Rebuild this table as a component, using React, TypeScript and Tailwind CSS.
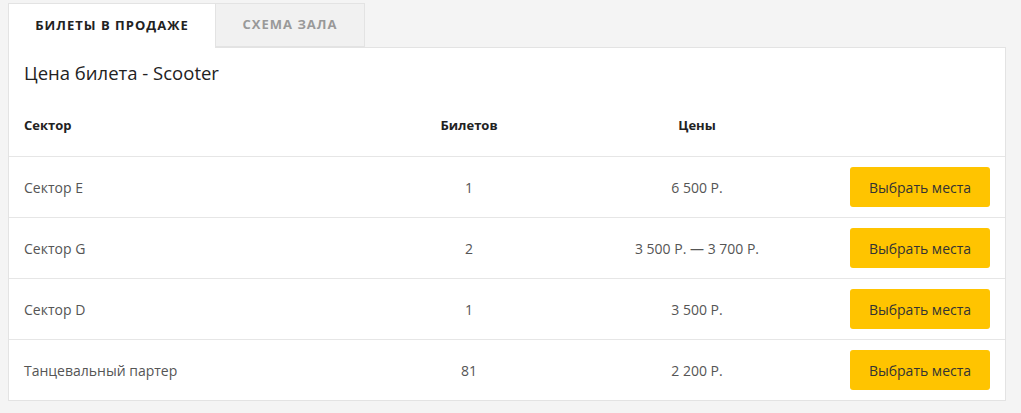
const rows = [
  { sector: "Сектор E", count: "1", price: "6 500 Р." },
  { sector: "Сектор G", count: "2", price: "3 500 Р. — 3 700 Р." },
  { sector: "Сектор D", count: "1", price: "3 500 Р." },
  { sector: "Танцевальный партер", count: "81", price: "2 200 Р." },
];

export default function App() {
  return (
    <div className="h-[413px] w-[1021px] bg-[#f4f4f4] pl-2 pt-[3px] font-['Open_Sans',sans-serif]">
      <div className="w-[998px]">
        <div className="flex">
          <div className="relative z-10 -mb-px flex h-[45px] w-[208px] items-center justify-center border border-b-0 border-[#e3e3e3] bg-white text-[13px] font-bold tracking-[1px] text-[#222]">
            БИЛЕТЫ В ПРОДАЖЕ
          </div>
          <div className="flex h-[44px] w-[149px] items-center justify-center border border-l-0 border-[#e3e3e3] bg-[#f1f1f1] text-[13px] font-bold tracking-[1px] text-[#999]">
            СХЕМА ЗАЛА
          </div>
        </div>
        <div className="border border-[#e3e3e3] bg-white">
          <div className="px-[15px] pb-[11px] pt-[13px] text-[18.5px] leading-[24px] text-[#222]">
            Цена билета - Scooter
          </div>
          <div className="grid h-[60px] grid-cols-[381px_158px_298px_1fr] items-center text-[13px] font-bold text-[#222]">
            <div className="pl-[15px]">Сектор</div>
            <div className="text-center">Билетов</div>
            <div className="text-center">Цены</div>
            <div />
          </div>
          {rows.map((r) => (
            <div
              key={r.sector}
              className="grid h-[61px] grid-cols-[381px_158px_298px_1fr] items-center border-t border-[#e6e6e6] text-[14px] text-[#555]"
            >
              <div className="pl-[15px]">{r.sector}</div>
              <div className="text-center">{r.count}</div>
              <div className="text-center">{r.price}</div>
              <div className="flex justify-end pr-[15px]">
                <button className="h-[40px] w-[140px] rounded-[3px] bg-[#ffc400] text-[14px] text-[#333]">
                  Выбрать места
                </button>
              </div>
            </div>
          ))}
        </div>
      </div>
    </div>
  );
}
